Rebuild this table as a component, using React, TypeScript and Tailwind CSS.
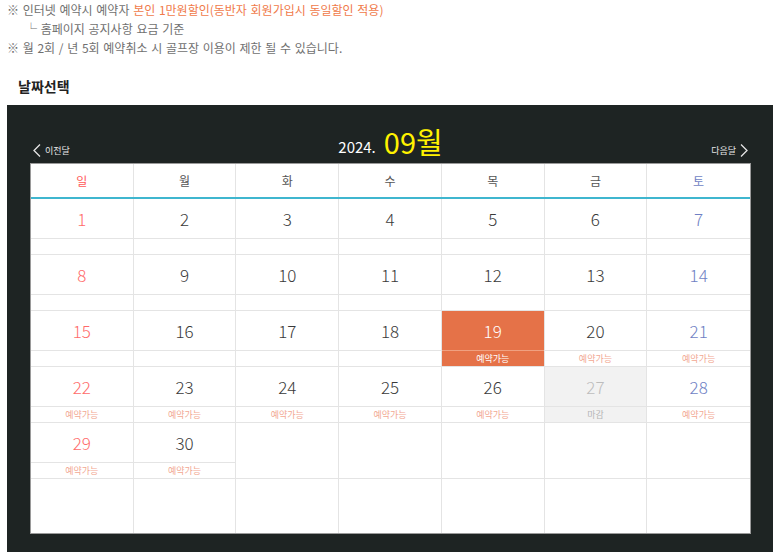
import React from "react";

type Day = { d: number; label?: string; state?: "selected" | "closed" };

const dows = ["일", "월", "화", "수", "목", "금", "토"];

const days: Day[] = Array.from({ length: 30 }, (_, i) => {
    const d = i + 1;
    if (d === 19) return { d, label: "예약가능", state: "selected" };
    if (d === 27) return { d, label: "마감", state: "closed" };
    if (d >= 20) return { d, label: "예약가능" };
    return { d };
});

const weeks: (Day | null)[][] = [];
for (let i = 0; i < 6; i++) {
    const row: (Day | null)[] = [];
    for (let j = 0; j < 7; j++) row.push(days[i * 7 + j] ?? null);
    weeks.push(row);
}

const Chevron = ({ dir }: { dir: "left" | "right" }) => (
    <svg width="8" height="13" viewBox="0 0 8 13" fill="none" stroke="#e5e5e5" strokeWidth="1.3">
        {dir === "left" ? <polyline points="7,0.5 1,6.5 7,12.5" /> : <polyline points="1,0.5 7,6.5 1,12.5" />}
    </svg>
);

const DayCell = ({ day, col }: { day: Day | null; col: number }) => {
    const last = col === 6;
    if (!day) {
        return <div className={`h-[56px] border-b border-[#e4e4e4] ${last ? "" : "border-r"}`} />;
    }
    const selected = day.state === "selected";
    const closed = day.state === "closed";
    let numColor = "text-[#3a3a3a]";
    if (col === 0) numColor = "text-[#ff6b6b]";
    if (col === 6) numColor = "text-[#6f7fc4]";
    if (selected) numColor = "text-white";
    if (closed) numColor = "text-[#bdbdbd]";
    const bg = selected ? "bg-[#e57248]" : closed ? "bg-[#f2f2f2]" : "bg-white";
    return (
        <div className={`flex flex-col border-[#e4e4e4] ${last ? "" : "border-r"} ${bg}`}>
            <div className={`h-[40px] flex items-center justify-center border-b ${selected ? "border-[#f0a080]" : "border-[#e4e4e4]"} text-[17px] font-light ${numColor}`}>
                {day.d}
            </div>
            <div className={`h-[16px] flex items-center justify-center border-b border-[#e4e4e4] text-[9px] leading-none ${selected ? "text-white" : closed ? "text-[#b5b5b5]" : "text-[#f2a892]"}`}>
                {day.label}
            </div>
        </div>
    );
};

export default function App() {
    return (
        <div className="w-[773px] h-[552px] overflow-hidden bg-white text-[#707070]" style={{ fontFamily: '"Noto Sans CJK KR", "Noto Sans", sans-serif' }}>
            {/* notice */}
            <div className="pl-[7px] text-[12px] leading-[19px] [word-spacing:1px]">
                <p>
                    ※ 인터넷 예약시 예약자 <span className="text-[#f07a4a]">본인 1만원할인(동반자 회원가입시 동일할인 적용)</span>
                </p>
                <p className="pl-[18px]">└ 홈페이지 공지사항 요금 기준</p>
                <p>※ 월 2회 / 년 5회 예약취소 시 골프장 이용이 제한 될 수 있습니다.</p>
            </div>
            <h3 className="pl-[18px] mt-[20px] text-[14px] font-bold text-[#222] leading-[18px]">날짜선택</h3>

            {/* calendar panel */}
            <div className="ml-[7px] mt-[10px] bg-[#1e2423] pl-[23px] pr-[22px] pb-[20px]">
                <div className="h-[58px] flex items-end justify-between pb-[5px]">
                    <div className="flex items-center gap-[4px] pl-[3px] pb-[1px]">
                        <Chevron dir="left" />
                        <span className="text-[9px] text-[#e5e5e5]">이전달</span>
                    </div>
                    <div className="flex items-end gap-[8px]">
                        <span className="text-[15px] text-white leading-[20px] pb-[1px]">2024.</span>
                        <span className="text-[29px] text-[#fff200] leading-[34px]">09월</span>
                    </div>
                    <div className="flex items-center gap-[4px] pr-[3px] pb-[1px]">
                        <span className="text-[9px] text-[#e5e5e5]">다음달</span>
                        <Chevron dir="right" />
                    </div>
                </div>

                <div className="bg-white border border-[#9a9a9a]">
                    <div className="grid grid-cols-7 h-[35px] border-b-2 border-[#3fb6cf]">
                        {dows.map((d, i) => (
                            <div
                                key={d}
                                className={`flex items-center justify-center text-[12px] border-[#e4e4e4] ${i < 6 ? "border-r" : ""} ${i === 0 ? "text-[#ff5a5a]" : i === 6 ? "text-[#6f7fc4]" : "text-[#555]"}`}
                            >
                                {d}
                            </div>
                        ))}
                    </div>
                    {weeks.map((w, wi) => (
                        <div key={wi} className={`grid grid-cols-7 ${wi === 5 ? "h-[54px] [&>div]:h-[54px] [&>div]:border-b-0" : ""}`}>
                            {w.map((day, ci) => (
                                <DayCell key={ci} day={day} col={ci} />
                            ))}
                        </div>
                    ))}
                </div>
            </div>
        </div>
    );
}
